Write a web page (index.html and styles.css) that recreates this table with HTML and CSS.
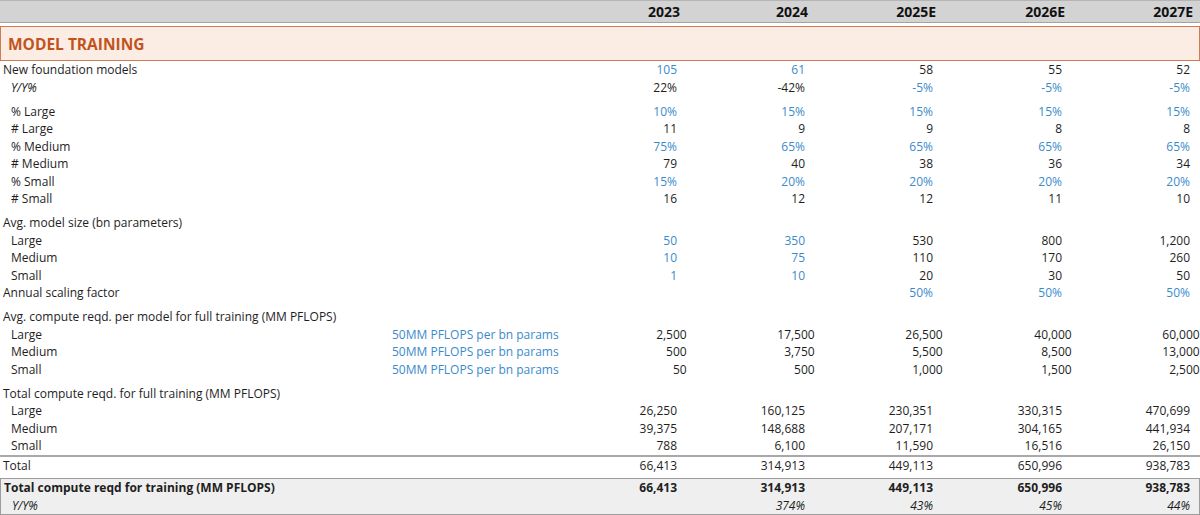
FILE: index.html
```html
<!DOCTYPE html>
<html>
<head>
<meta charset="utf-8">
<link rel="stylesheet" href="styles.css">
</head>
<body>
<div class="sheet">
  <div class="row head">
    <div class="lbl"></div><div class="note"></div>
    <div class="num">2023</div><div class="num">2024</div><div class="num">2025E</div><div class="num">2026E</div><div class="num">2027E</div>
  </div>
  <div class="banner">MODEL TRAINING</div>

  <div class="row"><div class="lbl">New foundation models</div><div class="note"></div>
    <div class="num b">105</div><div class="num b">61</div><div class="num">58</div><div class="num">55</div><div class="num">52</div></div>
  <div class="row"><div class="lbl in it">Y/Y%</div><div class="note"></div>
    <div class="num">22%</div><div class="num">-42%</div><div class="num b">-5%</div><div class="num b">-5%</div><div class="num b">-5%</div></div>
  <div class="sp"></div>
  <div class="row"><div class="lbl in">% Large</div><div class="note"></div>
    <div class="num b">10%</div><div class="num b">15%</div><div class="num b">15%</div><div class="num b">15%</div><div class="num b">15%</div></div>
  <div class="row"><div class="lbl in"># Large</div><div class="note"></div>
    <div class="num">11</div><div class="num">9</div><div class="num">9</div><div class="num">8</div><div class="num">8</div></div>
  <div class="row"><div class="lbl in">% Medium</div><div class="note"></div>
    <div class="num b">75%</div><div class="num b">65%</div><div class="num b">65%</div><div class="num b">65%</div><div class="num b">65%</div></div>
  <div class="row"><div class="lbl in"># Medium</div><div class="note"></div>
    <div class="num">79</div><div class="num">40</div><div class="num">38</div><div class="num">36</div><div class="num">34</div></div>
  <div class="row"><div class="lbl in">% Small</div><div class="note"></div>
    <div class="num b">15%</div><div class="num b">20%</div><div class="num b">20%</div><div class="num b">20%</div><div class="num b">20%</div></div>
  <div class="row"><div class="lbl in"># Small</div><div class="note"></div>
    <div class="num">16</div><div class="num">12</div><div class="num">12</div><div class="num">11</div><div class="num">10</div></div>
  <div class="sp"></div>
  <div class="row"><div class="lbl">Avg. model size (bn parameters)</div><div class="note"></div>
    <div class="num"></div><div class="num"></div><div class="num"></div><div class="num"></div><div class="num"></div></div>
  <div class="row"><div class="lbl in">Large</div><div class="note"></div>
    <div class="num b">50</div><div class="num b">350</div><div class="num">530</div><div class="num">800</div><div class="num">1,200</div></div>
  <div class="row"><div class="lbl in">Medium</div><div class="note"></div>
    <div class="num b">10</div><div class="num b">75</div><div class="num">110</div><div class="num">170</div><div class="num">260</div></div>
  <div class="row"><div class="lbl in">Small</div><div class="note"></div>
    <div class="num b">1</div><div class="num b">10</div><div class="num">20</div><div class="num">30</div><div class="num">50</div></div>
  <div class="row"><div class="lbl">Annual scaling factor</div><div class="note"></div>
    <div class="num"></div><div class="num"></div><div class="num b">50%</div><div class="num b">50%</div><div class="num b">50%</div></div>
  <div class="sp"></div>
  <div class="row"><div class="lbl wide">Avg. compute reqd. per model for full training (MM PFLOPS)</div>
    <div class="num"></div><div class="num"></div><div class="num"></div><div class="num"></div><div class="num"></div></div>
  <div class="row"><div class="lbl in">Large</div><div class="note b">50MM PFLOPS per bn params</div>
    <div class="num">2,500</div><div class="num">17,500</div><div class="num">26,500</div><div class="num">40,000</div><div class="num">60,000</div></div>
  <div class="row"><div class="lbl in">Medium</div><div class="note b">50MM PFLOPS per bn params</div>
    <div class="num">500</div><div class="num">3,750</div><div class="num">5,500</div><div class="num">8,500</div><div class="num">13,000</div></div>
  <div class="row"><div class="lbl in">Small</div><div class="note b">50MM PFLOPS per bn params</div>
    <div class="num">50</div><div class="num">500</div><div class="num">1,000</div><div class="num">1,500</div><div class="num">2,500</div></div>
  <div class="sp"></div>
  <div class="row"><div class="lbl">Total compute reqd. for full training (MM PFLOPS)</div><div class="note"></div>
    <div class="num"></div><div class="num"></div><div class="num"></div><div class="num"></div><div class="num"></div></div>
  <div class="row"><div class="lbl in">Large</div><div class="note"></div>
    <div class="num">26,250</div><div class="num">160,125</div><div class="num">230,351</div><div class="num">330,315</div><div class="num">470,699</div></div>
  <div class="row"><div class="lbl in">Medium</div><div class="note"></div>
    <div class="num">39,375</div><div class="num">148,688</div><div class="num">207,171</div><div class="num">304,165</div><div class="num">441,934</div></div>
  <div class="row"><div class="lbl in">Small</div><div class="note"></div>
    <div class="num">788</div><div class="num">6,100</div><div class="num">11,590</div><div class="num">16,516</div><div class="num">26,150</div></div>
  <div class="row total"><div class="lbl">Total</div><div class="note"></div>
    <div class="num">66,413</div><div class="num">314,913</div><div class="num">449,113</div><div class="num">650,996</div><div class="num">938,783</div></div>

  <div class="summary">
    <div class="row bold"><div class="lbl wide">Total compute reqd for training (MM PFLOPS)</div>
      <div class="num">66,413</div><div class="num">314,913</div><div class="num">449,113</div><div class="num">650,996</div><div class="num">938,783</div></div>
    <div class="row"><div class="lbl in it">Y/Y%</div><div class="note"></div>
      <div class="num it"></div><div class="num it">374%</div><div class="num it">43%</div><div class="num it">45%</div><div class="num it">44%</div></div>
  </div>
</div>
</body>
</html>
```

FILE: styles.css
```css
html, body {
  margin: 0;
  padding: 0;
  background: #ffffff;
}
body {
  font-family: "Open Sans", "Noto Sans", sans-serif;
  font-size: 12px;
  color: #1e1e1e;
}
.sheet {
  width: 1200px;
}
.row {
  display: grid;
  grid-template-columns: 392px 1fr 128px 128px 128px 129px 128px;
  padding-right: 10px;
  height: 17.5px;
  line-height: 17.5px;
  white-space: nowrap;
}
.lbl {
  padding-left: 3px;
}
.lbl.in {
  padding-left: 11px;
}
.lbl.wide {
  grid-column: 1 / 3;
}
.num {
  text-align: right;
}
.b {
  color: #3a8bcb;
}
.it {
  font-style: italic;
}
.head {
  height: 21px;
  line-height: 22px;
  background: #d3d3d3;
  border-top: 1px solid #b5b5b5;
  border-bottom: 1px solid #a3a3a3;
  padding-right: 7px;
  font-weight: 700;
  font-size: 14px;
  color: #111;
}
.banner {
  margin-top: 3px;
  height: 33px;
  line-height: 34px;
  background: #fcede4;
  border: 1px solid #cf7c56;
  color: #c2531d;
  font-weight: 700;
  font-size: 15.5px;
  padding-left: 7px;
  width: 1191px;
}
.sp {
  height: 6.5px;
}
.total {
  border-top: 2px solid #a9a9a9;
}
.summary {
  margin-top: 4px;
  background: #efefef;
  border: 1px solid #9c9c9c;
  width: 1198px;
}
.summary .row {
  padding-right: 9px;
}
.bold {
  font-weight: 700;
}
```
